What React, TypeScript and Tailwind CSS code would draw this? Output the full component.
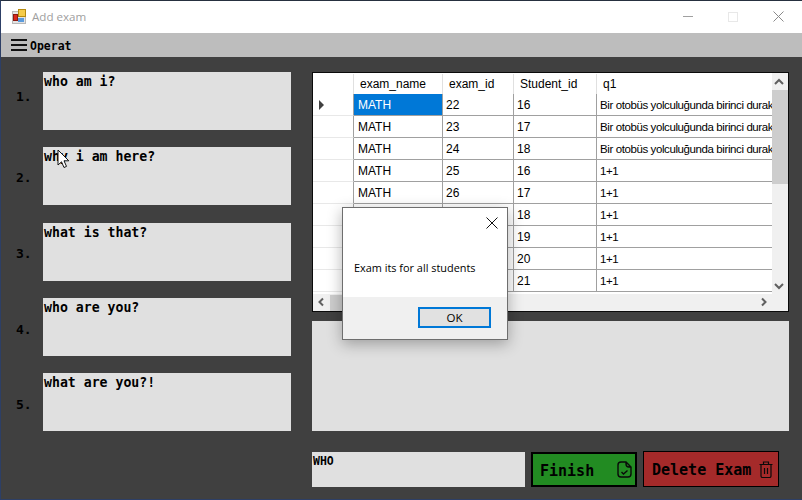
import React from "react";

const questions = [
  { label: "1.", text: "who am i?", top: "pt-[17px]" },
  { label: "2.", text: "why i am here?", top: "pt-[23px]" },
  { label: "3.", text: "what is that?", top: "pt-[23px]" },
  { label: "4.", text: "who are you?", top: "pt-[24px]" },
  { label: "5.", text: "what are you?!", top: "pt-[24px]" },
];

const longQ = "Bir otobüs yolculuğunda birinci durak";
const rows = [
  ["22", "16", longQ],
  ["23", "17", longQ],
  ["24", "18", longQ],
  ["25", "16", "1+1"],
  ["26", "17", "1+1"],
  ["27", "18", "1+1"],
  ["28", "19", "1+1"],
  ["29", "20", "1+1"],
  ["30", "21", "1+1"],
];

const AppIcon = () => (
  <svg width="15" height="15" viewBox="0 0 15 15">
    <rect x="0.5" y="2.5" width="13" height="12" fill="#e4e4e4" stroke="#b8b8b8" />
    <rect x="6.5" y="0.5" width="7" height="7" fill="#f5cb4a" stroke="#b58a10" />
    <rect x="1.5" y="5.5" width="4" height="6" fill="#d8281c" stroke="#8c1a12" />
    <rect x="6" y="9" width="6" height="4" fill="#5b9bdc" />
  </svg>
);

const Grid = () => (
  <div className="h-[240px] border border-[#0a0a0a] bg-[#f0f0f0] font-['Liberation_Sans',sans-serif] text-[12px] font-normal text-black">
    <div className="flex h-[221px]">
      <div className="w-[459px] overflow-hidden bg-white">
        <div className="flex h-[21px] pt-[1px]">
          <div className="h-full w-[41px] shrink-0 border-r border-[#e0e0e0]" />
          <div className="h-full w-[89px] shrink-0 border-r border-[#e0e0e0] pl-[6px] leading-[20px]">exam_name</div>
          <div className="h-full w-[71px] shrink-0 border-r border-[#e0e0e0] pl-[6px] leading-[20px]">exam_id</div>
          <div className="h-full w-[83px] shrink-0 border-r border-[#e0e0e0] pl-[6px] leading-[20px]">Student_id</div>
          <div className="h-full flex-1 pl-[6px] leading-[20px]">q1</div>
        </div>
        {rows.map((row, i) => (
          <div key={row[0]} className="flex h-[22px]">
            <div className="flex w-[41px] shrink-0 items-center border-r border-b border-r-[#a0a0a0] border-b-[#e8e8e8] pl-[6px]">
              {i === 0 && <div className="h-0 w-0 border-y-[5px] border-l-[5px] border-y-transparent border-l-[#404040]" />}
            </div>
            <div className={`w-[89px] shrink-0 border-r border-b border-[#a0a0a0] pl-[4px] leading-[22px] ${i === 0 ? "bg-[#0078d7] text-white" : ""}`}>MATH</div>
            <div className="w-[71px] shrink-0 border-r border-b border-[#a0a0a0] pl-[3px] leading-[22px]">{row[0]}</div>
            <div className="w-[83px] shrink-0 border-r border-b border-[#a0a0a0] pl-[3px] leading-[22px]">{row[1]}</div>
            <div className="flex-1 overflow-hidden whitespace-nowrap border-b border-[#a0a0a0] pl-[3px] text-[11.5px] leading-[22px] tracking-[-0.4px]">{row[2]}</div>
          </div>
        ))}
      </div>
      <div className="flex w-[16px] flex-col items-center bg-[#f0f0f0]">
        <svg width="16" height="17" viewBox="0 0 16 17" className="shrink-0">
          <path d="M3 11 L7 7 L11 11" fill="none" stroke="#606060" strokeWidth="2" />
        </svg>
        <div className="h-[94px] w-full bg-[#cdcdcd]" />
        <div className="flex-1" />
        <svg width="16" height="17" viewBox="0 0 16 17" className="shrink-0">
          <path d="M3 7 L7 11 L11 7" fill="none" stroke="#606060" strokeWidth="2" />
        </svg>
      </div>
    </div>
    <div className="flex h-[17px] items-center">
      <svg width="17" height="17" viewBox="0 0 17 17" className="shrink-0">
        <path d="M10 4.5 L6.5 8 L10 11.5" fill="none" stroke="#606060" strokeWidth="2" />
      </svg>
      <div className="h-[16px] w-[160px] bg-[#cdcdcd]" />
      <div className="flex-1" />
      <svg width="17" height="17" viewBox="0 0 17 17" className="mr-[16px] shrink-0">
        <path d="M7 4.5 L10.5 8 L7 11.5" fill="none" stroke="#606060" strokeWidth="2" />
      </svg>
    </div>
  </div>
);

export default function App() {
  return (
    <div className="relative flex h-[500px] w-[802px] flex-col overflow-hidden border-t border-b border-l border-t-[#26303f] border-b-[#2d3f66] border-l-[#2d3f66] bg-[#404040] font-['DejaVu_Sans_Mono',monospace] font-bold text-black">
      {/* title bar */}
      <div className="flex h-[32px] shrink-0 items-center bg-white pb-[1px] pl-[11px] pr-[18px]">
        <AppIcon />
        <span className="ml-[5px] font-['Open_Sans',sans-serif] text-[11.6px] font-normal text-[#a0a0a0]">Add exam</span>
        <div className="flex-1" />
        <div className="h-px w-[10px] bg-[#a0a0a0]" />
        <div className="ml-[35px] h-[10px] w-[10px] border border-[#e8e8e8]" />
        <svg width="11" height="11" viewBox="0 0 11 11" className="ml-[35px]">
          <path d="M0.5 0.5 L10.5 10.5 M10.5 0.5 L0.5 10.5" stroke="#8a8a8a" strokeWidth="1" />
        </svg>
      </div>
      {/* menu */}
      <div className="flex h-[24px] shrink-0 items-center bg-[#bdbdbd] pl-[10px] text-[11.5px]">
        <svg width="16" height="12" viewBox="0 0 16 12">
          <path d="M0 1 H16 M0 6 H16 M0 11 H16" stroke="#111" strokeWidth="2" />
        </svg>
        <span className="ml-[3px] pt-[3px]">Operat</span>
      </div>
      {/* body */}
      <div className="flex flex-1 pt-[15px]">
        <div className="flex w-[311px] shrink-0 flex-col gap-[17.25px]">
          {questions.map((q) => (
            <div key={q.label} className="flex h-[58px]">
              <div className={`w-[42px] shrink-0 pl-[15px] text-[13px] leading-[16px] ${q.top}`}>{q.label}</div>
              <div className="h-full w-[248px] bg-[#e0e0e0] pl-[1px] pt-[2px] text-[13.2px] leading-[16px]">{q.text}</div>
            </div>
          ))}
        </div>
        <div className="flex flex-1 flex-col pr-[13px]">
          <Grid />
          <div className="mt-[9px] h-[110px] bg-[#e0e0e0]" />
          <div className="mt-[20px] flex h-[36px] items-start">
            <div className="mt-[1px] h-[35px] w-[213px] bg-[#e0e0e0] pl-[1px] pt-[1px] text-[11.5px] leading-[16px]">WHO</div>
            <button className="ml-[6px] mt-[1px] flex h-[35px] w-[106px] items-center justify-between border-2 border-black bg-[#228b22] pl-[7px] pr-[3px] text-[15px]">
              <span className="pt-[3px]">Finish</span>
              <svg width="15" height="17" viewBox="0 0 15 17" fill="none" stroke="#0a0a0a" strokeWidth="1.4">
                <path d="M4 1 H9 L14 6 V13 Q14 16 11 16 H4 Q1 16 1 13 V4 Q1 1 4 1 Z M9 1 V3 Q9 6 12 6 H14 M4.5 11 L6.5 13 L10.5 9.5" />
              </svg>
            </button>
            <button className="ml-[6px] flex h-[36px] w-[136px] items-center justify-between border border-black bg-[#a52a2a] pl-[8px] pr-[5px] text-[15px]">
              <span className="pt-[2px]">Delete Exam</span>
              <svg width="14" height="17" viewBox="0 0 14 17" fill="none" stroke="#0a0a0a" strokeWidth="1.2">
                <path d="M0.5 3.5 H13.5 M4.5 3.5 V1 H9.5 V3.5 M2 3.5 V15 Q2 16.5 3.5 16.5 H10.5 Q12 16.5 12 15 V3.5 M5.5 7 V13 M8.5 7 V13" />
              </svg>
            </button>
          </div>
        </div>
      </div>
      {/* mouse pointer over the second question */}
      <svg width="13" height="20" viewBox="0 0 13 20" className="absolute left-[56px] top-[148px]">
        <path d="M1 1 V16 L4.5 12.8 L7 18.5 L9.5 17.4 L7 11.8 H11.8 Z" fill="#fff" stroke="#111" strokeWidth="1" />
      </svg>
      {/* message box */}
      <div className="absolute left-[341px] top-[206px] flex h-[133px] w-[166px] flex-col border border-[#6e6e6e] bg-white font-['Open_Sans',sans-serif] font-normal shadow-[0_4px_14px_rgba(0,0,0,0.3)]">
        <div className="flex h-[89px] flex-col">
          <svg width="12" height="12" viewBox="0 0 12 12" className="ml-[143px] mt-[9px]">
            <path d="M0.5 0.5 L11.5 11.5 M11.5 0.5 L0.5 11.5" stroke="#111" strokeWidth="1" />
          </svg>
          <div className="ml-[11px] mt-[32px] text-[10.9px] leading-[14px]">Exam its for all students</div>
        </div>
        <div className="flex flex-1 items-start justify-end bg-[#f0f0f0] pr-[16px] pt-[10px]">
          <button className="h-[21px] w-[73px] border-2 border-[#0078d7] bg-[#e1e1e1] text-[11.5px] leading-[15px]">OK</button>
        </div>
      </div>
    </div>
  );
}
